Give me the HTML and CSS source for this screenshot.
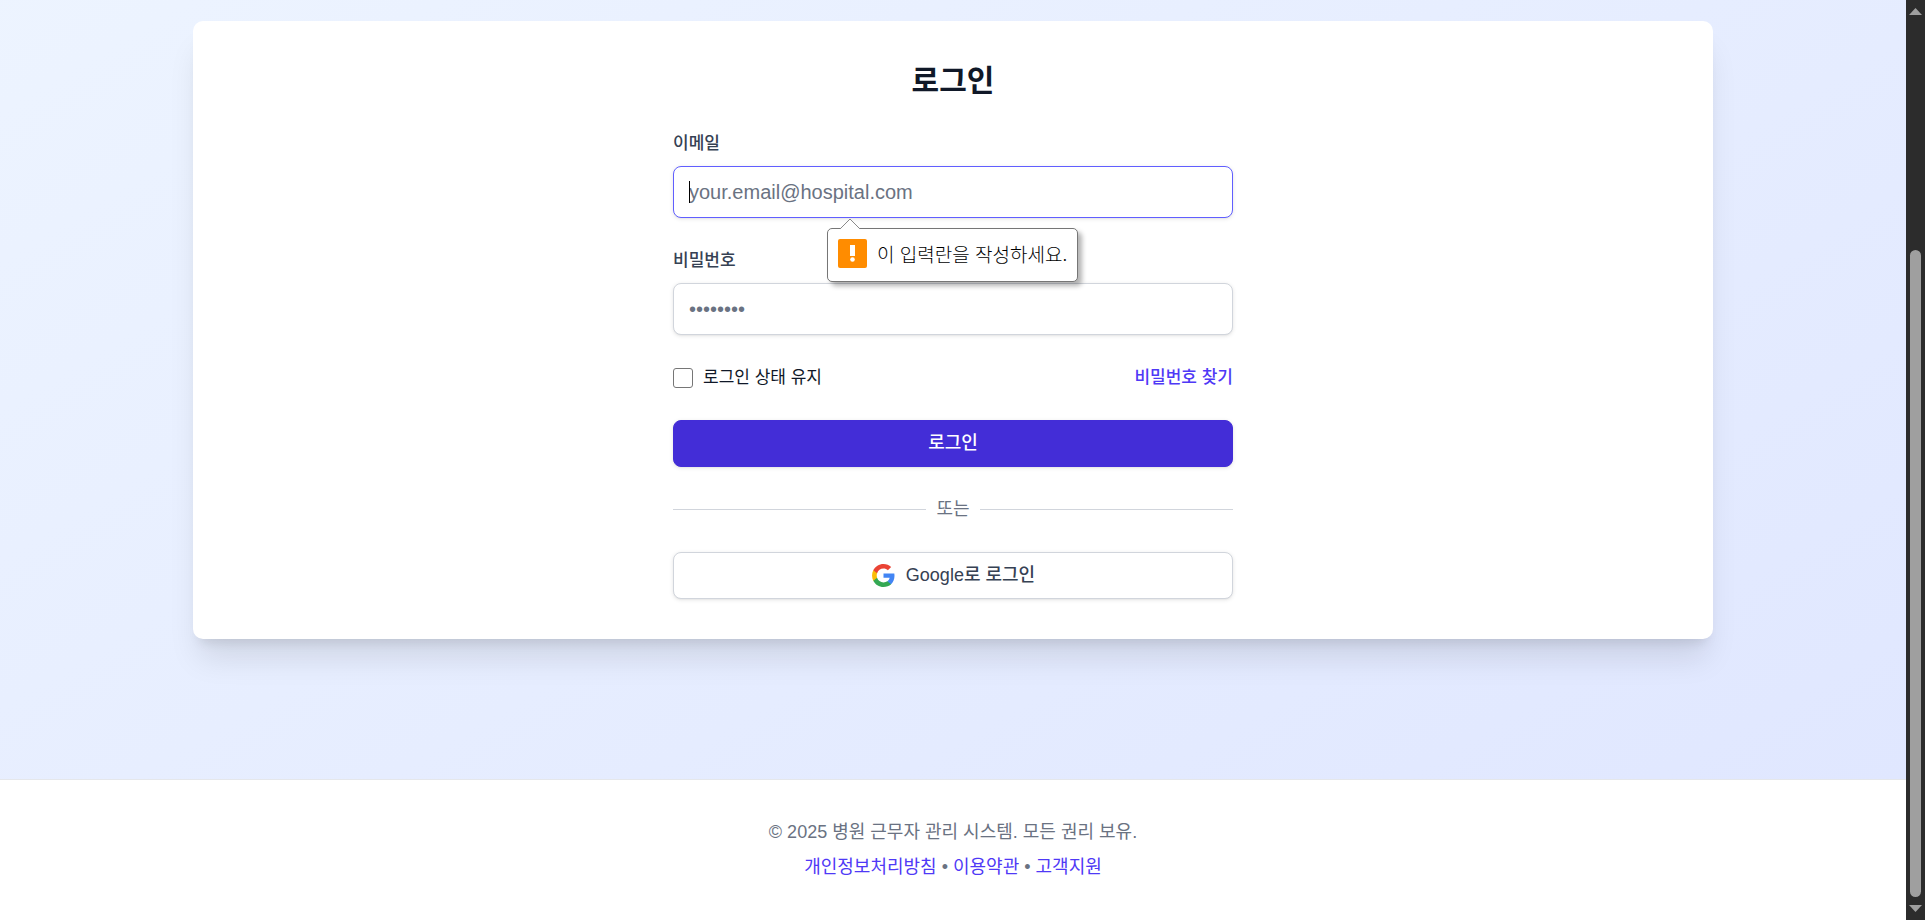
FILE: index.html
```html
<!DOCTYPE html>
<html lang="ko">
<head>
<meta charset="utf-8">
<title>로그인</title>
<link rel="stylesheet" href="styles.css">
</head>
<body>
<div class="page">
  <main class="main">
    <section class="card">
      <form class="form">
        <h2 class="title">로그인</h2>
        <div class="field">
          <label class="label" for="email">이메일</label>
          <div class="control">
            <input class="input input-focused" id="email" type="email" placeholder="your.email@hospital.com">
            <span class="caret"></span>
            <div class="tooltip" role="alert">
              <svg class="tooltip-arrow" viewBox="0 0 22 11" aria-hidden="true"><path d="M1 11 11 1 21 11" fill="#fff" stroke="#8a8a8a"/></svg>
              <svg class="tooltip-icon" viewBox="0 0 29 29" aria-hidden="true"><rect width="29" height="29" rx="2" fill="#ff8c00"/><path d="M12 6h5v11h-5z" fill="#fff"/><circle cx="14.500" cy="20.500" r="2.300" fill="#fff"/></svg>
              <span>이 입력란을 작성하세요.</span>
            </div>
          </div>
        </div>
        <div class="field">
          <label class="label" for="password">비밀번호</label>
          <input class="input" id="password" type="password" placeholder="••••••••">
        </div>
        <div class="options">
          <label class="remember" for="remember"><input class="checkbox" id="remember" type="checkbox">로그인 상태 유지</label>
          <a class="link forgot" href="#">비밀번호 찾기</a>
        </div>
        <button class="button button-primary" type="submit">로그인</button>
        <div class="divider">또는</div>
        <button class="button button-google" type="button">
          <svg class="google" viewBox="0 0 24 24" aria-hidden="true">
            <path fill="#4285F4" d="M22.560 12.250c0-.780-.070-1.530-.200-2.250H12v4.260h5.920c-.260 1.370-1.040 2.530-2.210 3.310v2.770h3.570c2.080-1.920 3.280-4.740 3.280-8.090z"/>
            <path fill="#34A853" d="M12 23c2.970 0 5.460-.980 7.280-2.660l-3.570-2.770c-.980.660-2.230 1.060-3.710 1.060-2.860 0-5.290-1.930-6.160-4.530H2.180v2.840C3.990 20.530 7.700 23 12 23z"/>
            <path fill="#FBBC05" d="M5.840 14.090c-.220-.660-.350-1.360-.350-2.090s.130-1.430.350-2.090V7.070H2.180C1.430 8.550 1 10.220 1 12s.430 3.450 1.180 4.930l3.660-2.840z"/>
            <path fill="#EA4335" d="M12 5.380c1.620 0 3.060.560 4.210 1.640l3.150-3.150C17.450 2.090 14.970 1 12 1 7.700 1 3.990 3.470 2.180 7.070l3.660 2.840c.870-2.600 3.300-4.530 6.160-4.530z"/>
          </svg>
          <span>Google로 로그인</span>
        </button>
      </form>
    </section>
  </main>
  <footer class="footer">
    <p class="footer-line">© 2025 병원 근무자 관리 시스템. 모든 권리 보유.</p>
    <p class="footer-line"><a class="link" href="#">개인정보처리방침</a> • <a class="link" href="#">이용약관</a> • <a class="link" href="#">고객지원</a></p>
  </footer>
</div>
<div class="scrollbar" aria-hidden="true">
  <svg class="scroll-arrow" viewBox="0 0 13 7"><path d="M6.500 0 13 7H0z" fill="#9f9f9f"/></svg>
  <div class="scroll-track"><div class="scroll-thumb"></div></div>
  <svg class="scroll-arrow" viewBox="0 0 13 7"><path d="M0 0h13L6.500 7z" fill="#9f9f9f"/></svg>
</div>
</body>
</html>
```
FILE: styles.css
```css
* { box-sizing: border-box; }

body {
  margin: 0;
  min-height: 100vh;
  display: flex;
  font-family: "Liberation Sans", "Noto Sans CJK KR", sans-serif;
  font-size: 18px;
  line-height: 25px;
  color: #101828;
}

.page {
  flex: 1;
  display: flex;
  flex-direction: column;
}

.main {
  flex: 1;
  padding: 21px 40px 140px;
  background: linear-gradient(to bottom right, #eff6ff, #e0e7ff) bottom / 100% calc(100% + 338px);
}

.card {
  max-width: 1520px;
  margin: 0 auto;
  padding: 40px;
  background: #fff;
  border-radius: 10px;
  box-shadow: 0 25px 31px -6px rgba(0, 0, 0, 0.1), 0 10px 12px -7px rgba(0, 0, 0, 0.1);
}

.form {
  max-width: 560px;
  margin: 0 auto;
  display: flex;
  flex-direction: column;
  gap: 30px;
}

.title {
  margin: 0;
  font-size: 30px;
  line-height: 40px;
  font-weight: 700;
  text-align: center;
}

.field {
  display: flex;
  flex-direction: column;
  gap: 10px;
}

.label {
  font-weight: 500;
  color: #364153;
}

.label,
.options { font-size: 17px; }

.control { position: relative; }

.input {
  display: block;
  width: 100%;
  height: 52px;
  padding: 10px 15px;
  border: 1px solid #d1d5dc;
  border-radius: 8px;
  background: #fff;
  box-shadow: 0 1px 4px rgba(0, 0, 0, 0.1), 0 1px 2px -1px rgba(0, 0, 0, 0.1);
  font: inherit;
  font-size: 20px;
  outline: none;
}

.input::placeholder { color: #6a7282; opacity: 1; }
.input-focused { border-color: #615fff; }

.caret {
  position: absolute;
  left: 16px;
  top: 15px;
  width: 1px;
  height: 22px;
  background: #000;
}

.tooltip {
  position: absolute;
  z-index: 1;
  left: 154px;
  top: 62px;
  padding: 10px 10px 13px;
  display: flex;
  align-items: flex-start;
  gap: 10px;
  border: 1px solid #767676;
  border-radius: 5px;
  background: #fff;
  box-shadow: 4px 4px 5px rgba(0, 0, 0, 0.3);
  color: #000;
  font-family: "Noto Sans CJK KR", sans-serif;
  font-weight: 300;
  font-size: 19px;
  line-height: 29px;
  white-space: nowrap;
}

.tooltip-arrow {
  position: absolute;
  left: 11px;
  top: -11px;
  width: 22px;
  height: 11px;
}

.tooltip-icon { width: 29px; height: 29px; }

.options {
  display: flex;
  justify-content: space-between;
  align-items: center;
}

.remember {
  display: flex;
  align-items: center;
  gap: 10px;
}

.checkbox {
  appearance: none;
  width: 20px;
  height: 20px;
  margin: 0;
  border: 1px solid #767676;
  border-radius: 3px;
  background: #fff;
}

.link { color: #4f39f6; text-decoration: none; }
.forgot { font-weight: 500; }

.button {
  height: 47px;
  display: flex;
  align-items: center;
  justify-content: center;
  gap: 10px;
  padding: 10px 20px;
  border: 1px solid #d1d5dc;
  border-radius: 8px;
  background: #fff;
  box-shadow: 0 1px 4px rgba(0, 0, 0, 0.1), 0 1px 2px -1px rgba(0, 0, 0, 0.1);
  font: inherit;
  font-weight: 500;
  color: #364153;
}

.button-primary {
  border-color: #432dd7;
  background: #432dd7;
  color: #fff;
}

.google { width: 25px; height: 25px; }

.divider {
  display: flex;
  align-items: center;
  gap: 10px;
  color: #6a7282;
}

.divider::before,
.divider::after {
  content: "";
  flex: 1;
  height: 1px;
  background: #d1d5dc;
}

.footer {
  padding: 40px;
  display: flex;
  flex-direction: column;
  gap: 10px;
  border-top: 1px solid #e5e7eb;
  background: #fff;
  color: #6a7282;
  text-align: center;
}

.footer-line { margin: 0; }

.scrollbar {
  width: 19px;
  padding: 8px 0;
  display: flex;
  flex-direction: column;
  align-items: center;
  gap: 8px;
  background: #2c2c2c;
}

.scroll-arrow { width: 13px; height: 7px; }

.scroll-track {
  flex: 1;
  width: 11px;
  display: flex;
  flex-direction: column;
  justify-content: flex-end;
}

.scroll-thumb {
  height: 74%;
  border-radius: 6px;
  background: #9f9f9f;
}
```
